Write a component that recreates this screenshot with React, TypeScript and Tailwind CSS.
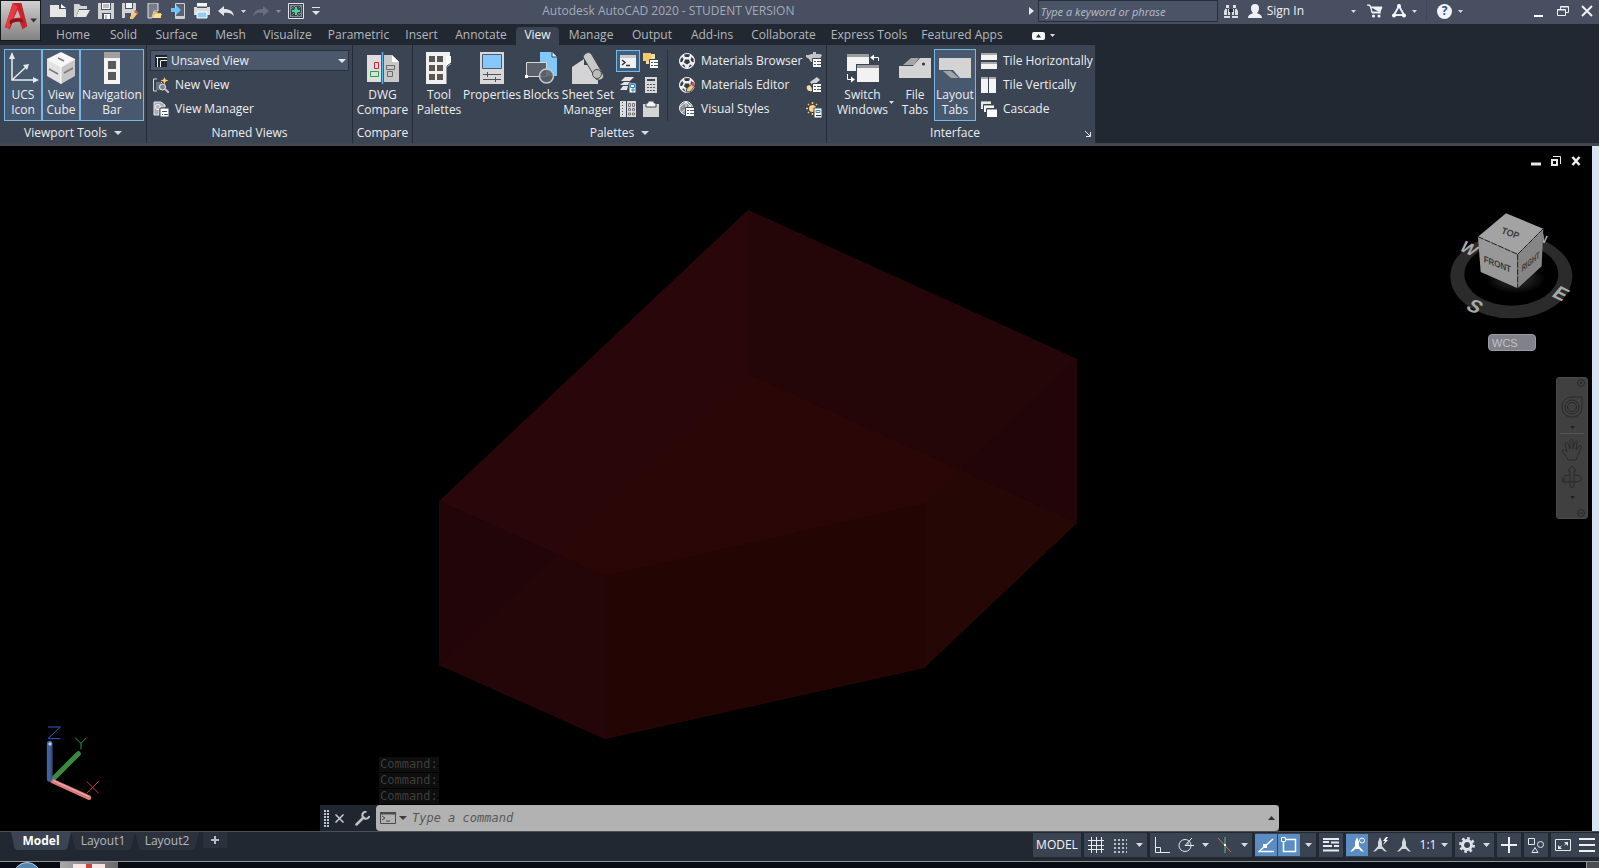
import type { ReactNode } from 'react'

type IconProps = { children: ReactNode; className?: string; box?: string }

function Icon({ children, className = 'w-4 h-4', box = '0 0 16 16' }: IconProps) {
  return (
    <svg className={`shrink-0 ${className}`} viewBox={box} fill="none" aria-hidden="true">
      {children}
    </svg>
  )
}

function Big({ children }: { children: ReactNode }) {
  return <Icon className="w-8 h-8" box="0 0 32 32">{children}</Icon>
}

function Caret({ className = 'w-[7px] h-1 text-[#d8dce2]' }: { className?: string }) {
  return (
    <svg className={`shrink-0 ${className}`} viewBox="0 0 8 4" preserveAspectRatio="none" aria-hidden="true">
      <path d="M0 0h8L4 4z" fill="currentColor" />
    </svg>
  )
}

const TABS = [
  { name: 'Home', width: 'w-[54px]' },
  { name: 'Solid', width: 'w-[47px]' },
  { name: 'Surface', width: 'w-[59px]' },
  { name: 'Mesh', width: 'w-[49px]' },
  { name: 'Visualize', width: 'w-[65px]' },
  { name: 'Parametric', width: 'w-[77px]' },
  { name: 'Insert', width: 'w-[49px]' },
  { name: 'Annotate', width: 'w-[70px]' },
  { name: 'View', width: 'w-[43px]' },
  { name: 'Manage', width: 'w-[64px]' },
  { name: 'Output', width: 'w-[58px]' },
  { name: 'Add-ins', width: 'w-[62px]' },
  { name: 'Collaborate', width: 'w-[81px]' },
  { name: 'Express Tools', width: 'w-[90px]' },
  { name: 'Featured Apps', width: 'w-[96px]' },
]

/* ---------- Title bar ---------- */

function QuickButton({ label, children }: { label: string; children: ReactNode }) {
  return (
    <button type="button" aria-label={label} className="flex h-[22px] w-6 items-center justify-center">
      <Icon>{children}</Icon>
    </button>
  )
}

function QuickAccess() {
  return (
    <div className="flex items-center pl-[46px]">
      <QuickButton label="New">
        <path d="M0 2h9v4h7v8H0z" fill="#e6e6e6" />
        <path d="M11 1l5 4h-5z" fill="#fff" />
      </QuickButton>
      <QuickButton label="Open">
        <path d="M0 1h5l2 2h6v3H5l-3 8H0z" fill="#d4d4d4" />
        <path d="M5 7h11l-4 7H2z" fill="#e8e8e8" />
      </QuickButton>
      <QuickButton label="Save">
        <path d="M0 0h16v16H0z" fill="#d2d2d2" />
        <path d="M3 0h10v7H3zM4 10h9v6H4z" fill="#4a5364" />
        <path d="M4 0h8v6H4zM6 11h6v5H6z" fill="#f5f5f5" />
        <path d="M5 2h6M5 4h6M8 12v4" stroke="#7b818c" />
      </QuickButton>
      <QuickButton label="Save As">
        <path d="M0 0h14v10l-5 5H0z" fill="#d2d2d2" />
        <path d="M3 0h8v6H3zM3 10h6v5H3z" fill="#4a5364" />
        <path d="M4 0h6v5H4z" fill="#f5f5f5" />
        <path d="M8 14l5-6 3 2-5 6-3 0z" fill="#f6c877" />
        <path d="M13 7l3 2-1 2-3-2z" fill="#e05a5a" />
      </QuickButton>
      <QuickButton label="Open from Web and Mobile">
        <path d="M2 0h10v8H8l-2 7H2z" fill="#777d88" stroke="#e0e0e0" />
        <path d="M6 15l2-6h3l1 1h3v5z" fill="#f4c35f" />
        <path d="M9 11h7l-2 4H7z" fill="#ffe0a0" />
      </QuickButton>
      <QuickButton label="Save to Web and Mobile">
        <path d="M5.500 .5h9v15h-9z" fill="#596271" stroke="#d0d0d0" />
        <path d="M6 13h8v2H6z" fill="#cfcfcf" />
        <path d="M1 5h5V2l5 5-5 5V9H1z" fill="#6cc3f5" />
      </QuickButton>
      <QuickButton label="Plot">
        <path d="M3 0h10v4H3z" fill="#f5f5f5" />
        <path d="M0 4h16v8H0z" fill="#dcdcdc" />
        <path d="M3 3.500h10v1.500H3z" fill="#4a5364" />
        <path d="M3 9h10v6H3z" fill="#8fcdf5" stroke="#fff" />
      </QuickButton>
      <QuickButton label="Undo">
        <path d="M0 8l6-5v3c6 0 9 2 10 7-3-3-5-3.500-10-3v3z" fill="#e2e4e8" />
      </QuickButton>
      <button type="button" aria-label="Undo list" className="flex w-[11px] justify-center"><Caret className="h-[3px] w-[5px] text-[#d8dce2]" /></button>
      <QuickButton label="Redo">
        <path d="M16 8l-6-5v3C4 6 1 8 0 13c3-3 5-3.500 10-3v3z" fill="#68707f" />
      </QuickButton>
      <button type="button" aria-label="Redo list" className="flex w-[11px] justify-center"><Caret className="h-[3px] w-[5px] text-[#8b92a0]" /></button>
      <QuickButton label="Isolate">
        <path d="M.5 .5h15v15H.5z" fill="#3a4450" stroke="#e0e4e8" />
        <path d="M2.500 2.500h11v11h-11z" stroke="#cfd4da" strokeDasharray="1 1" />
        <path d="M3 3l10 10M13 3L3 13M3 6l4-3M9 13l4-3" stroke="#a5adb8" strokeDasharray="1 1" />
        <path d="M8 4v8M4 8h8" stroke="#4fd394" strokeWidth="2" />
      </QuickButton>
      <button type="button" aria-label="Customize" className="flex h-[22px] w-4 flex-col items-center justify-center gap-[3px]">
        <span className="h-px w-2 bg-[#e0e3e8]" />
        <Caret className="h-1 w-2 text-[#e0e3e8]" />
      </button>
    </div>
  )
}

function TitleBar() {
  return (
    <header className="flex h-6 items-center bg-[#474f61] pb-[2px]">
      <QuickAccess />
      <h1 className="flex-1 text-center text-xs text-[#a5abb6]">Autodesk AutoCAD 2020 - STUDENT VERSION</h1>
      <div className="flex items-center pl-4">
        <Icon className="mr-1 h-2 w-[5px]" box="0 0 5 8"><path d="M0 0l5 4-5 4z" fill="#e6e9ee" /></Icon>
        <input
          type="text"
          aria-label="Search"
          placeholder="Type a keyword or phrase"
          className="h-[22px] w-[180px] border border-[#262d3a] bg-[#4b5467] px-[2px] text-[11px] italic text-white outline-none placeholder:text-[#b7bcc6]"
        />
        <button type="button" aria-label="Find" className="ml-[6px]">
          <Icon className="h-4 w-[14px]" box="0 0 14 16">
            <path d="M2 2h3v3l1 2v8H0V8l2-3zM9 2h3v3l2 3v7H8V7l1-2z" fill="#dadde2" />
            <path d="M5 6h4v3H5z" fill="#272c36" /><path d="M0 12.500h6M8 12.500h6M2 5.500h3M9 5.500h3M3.500 6v6M10.500 6v6" stroke="#4b505a" />
          </Icon>
        </button>
        <button type="button" className="ml-[9px] flex items-center gap-1 text-xs text-[#f0f1f3]">
          <Icon>
            <path d="M8 1c3 0 4 2 4 4 0 3-1 4-2 5 1 1 5 1 5 5H1c0-4 4-4 5-5-1-1-2-2-2-5 0-2 1-4 4-4z" fill="#edf0f4" />
          </Icon>
          Sign In
        </button>
        <button type="button" aria-label="Account menu" className="ml-[47px]"><Caret className="h-[3px] w-[5px] text-[#d8dce2]" /></button>
        <button type="button" aria-label="App store" className="ml-[11px]">
          <Icon>
            <path d="M0 2h3l2 8h9M4 4h11l-2 5H5z" fill="#eef1f5" stroke="#eef1f5" />
            <circle cx="6.500" cy="13" r="1.500" fill="#fff" /><circle cx="12" cy="13" r="1.500" fill="#fff" />
          </Icon>
        </button>
        <button type="button" aria-label="Connect" className="ml-2 flex items-center gap-[5px]">
          <Icon>
            <path d="M8 3L3 12h10z" stroke="#e6ebf3" strokeWidth="2" />
            <circle cx="8" cy="3" r="2" fill="#fff" /><circle cx="3" cy="12.500" r="2" fill="#fff" /><circle cx="13" cy="12.500" r="2" fill="#fff" />
          </Icon>
          <Caret className="h-[3px] w-[5px] text-[#d8dce2]" />
        </button>
        <span className="ml-[9px] h-5 w-px bg-[#3f4757]" />
        <button type="button" aria-label="Help" className="ml-[10px] flex items-center gap-[6px]">
          <span className="flex h-[15px] w-[15px] items-center justify-center rounded-full bg-[#f3f5f8] text-xs font-bold text-[#2c4b98]">?</span>
          <Caret className="h-[3px] w-[5px] text-[#d8dce2]" />
        </button>
        <div className="ml-[70px] mr-[6px] flex items-center gap-3">
          <button type="button" aria-label="Minimize">
            <Icon className="h-3 w-3" box="0 0 12 12"><path d="M1 11h9" stroke="#fff" strokeWidth="2" /></Icon>
          </button>
          <button type="button" aria-label="Restore">
            <Icon className="h-3 w-3" box="0 0 12 12">
              <path d="M3.500 4V1.500h8v6H9M.5 4.500h8v6h-8z" stroke="#eef0f3" /><path d="M.5 5h8M3.500 2h8" stroke="#eef0f3" />
            </Icon>
          </button>
          <button type="button" aria-label="Close">
            <Icon className="h-3 w-3" box="0 0 12 12"><path d="M1 1l10 10M11 1L1 11" stroke="#eef0f3" strokeWidth="2" /></Icon>
          </button>
        </div>
      </div>
    </header>
  )
}

function AppButton() {
  return (
    <button type="button" aria-label="Application menu" className="absolute left-0 top-0 z-10 h-[41px] w-[41px] border border-[#14181f] bg-linear-to-b from-[#d0d0d0] to-[#828282]">
      <svg viewBox="0 0 40 40" className="h-full w-full" aria-hidden="true">
        <path d="M12 2h9l6 24-5 3-3-8-7 1-3 7-5-2z" fill="#c8222c" />
        <path d="M17 9l3 8-7 1z" fill="#b9b9b9" />
        <path d="M12 2l5 4-5 13-4 9-4-1z" fill="#e23b42" />
        <path d="M9 20c5-3 9-3 13-1l1 3c-5-2-10-1-14 2z" fill="#8e121b" />
        <path d="M30 18h7l-3.500 4z" fill="#333" />
      </svg>
    </button>
  )
}

function RibbonTabs() {
  return (
    <nav className="flex h-[21px] items-end bg-[#222831] pl-[46px]">
      {TABS.map((tab) => (
        <button
          key={tab.name}
          type="button"
          className={`h-[18px] whitespace-nowrap pb-[2px] text-xs leading-4 ${tab.width} ${
            tab.name === 'View' ? 'rounded-t-sm bg-[#3b4452] text-[#f0f1f3]' : 'text-[#b4b8bf]'
          }`}
        >
          {tab.name}
        </button>
      ))}
      <button type="button" aria-label="Minimize ribbon" className="ml-[22px] flex h-[18px] items-center gap-[5px] pb-px">
        <Icon className="h-2 w-[13px]" box="0 0 13 8">
          <rect width="13" height="8" rx="2" fill="#f3f4f6" /><path d="M4 5.500L6.500 2 9 5.500z" fill="#222831" />
        </Icon>
        <Caret className="h-[3px] w-[5px] text-[#d8dce2]" />
      </button>
    </nav>
  )
}

/* ---------- Ribbon ---------- */

type PanelProps = { title: string; width: string; menu?: boolean; launcher?: boolean; children: ReactNode }

function Panel({ title, width, menu, launcher, children }: PanelProps) {
  return (
    <section className={`relative flex shrink-0 flex-col border-r border-[#252c38] bg-[#3b4452] pt-1 ${width}`}>
      <div className="flex h-[72px]">{children}</div>
      <h2 className={`flex h-[22px] items-center justify-center gap-[7px] pt-[2px] text-xs text-[#eceef1] ${launcher ? 'pr-3' : ''}`}>
        {title}
        {menu && <Caret className="h-1 w-2 text-[#d8dce2]" />}
      </h2>
      {launcher && (
        <button type="button" aria-label={`${title} settings`} className="absolute bottom-[6px] right-1">
          <Icon className="h-[6px] w-[6px]" box="0 0 6 6"><path d="M0 0l5 5M5.500 1v4.500H1" stroke="#e8eaee" /></Icon>
        </button>
      )}
    </section>
  )
}

type BigButtonProps = { lines: string[]; width: string; active?: boolean; children: ReactNode }

function BigButton({ lines, width, active, children }: BigButtonProps) {
  return (
    <button
      type="button"
      className={`flex h-[72px] shrink-0 flex-col items-center border pt-[2px] text-xs leading-[15px] text-[#eceef1] ${width} ${
        active ? 'border-[#76b8e8] bg-[#47586f]' : 'border-transparent'
      }`}
    >
      {children}
      <span className="mt-[3px] flex flex-col whitespace-nowrap">
        {lines.map((line) => <span key={line}>{line}</span>)}
      </span>
    </button>
  )
}

function RowButton({ label, children }: { label: string; children: ReactNode }) {
  return (
    <button type="button" className="flex h-6 items-center gap-[6px] whitespace-nowrap text-xs text-[#eceef1]">
      <Icon>{children}</Icon>
      {label}
    </button>
  )
}

function SmallButton({ label, active, children }: { label: string; active?: boolean; children: ReactNode }) {
  return (
    <button
      type="button"
      aria-label={label}
      className={`flex h-[22px] w-6 items-center justify-center border ${active ? 'border-[#76b8e8] bg-[#3d5f82]' : 'border-transparent'}`}
    >
      <Icon>{children}</Icon>
    </button>
  )
}

// list badge in the lower right corner of palette icons
function ListBadge({ tone = '#3b4452' }: { tone?: string }) {
  return (
    <>
      <path d="M6.500 6.500h9v9h-9z" fill="#fff" stroke={tone} />
      <path d="M8 9.500h2M11 9.500h4M8 12.500h2M11 12.500h4" stroke="#4a5260" />
    </>
  )
}

function Checkered() {
  return (
    <>
      <circle cx="8" cy="8" r="7.500" fill="#f0f0f0" stroke="#f5f5f5" />
      <path d="M5 1.500l3-.5 3 .5-1 2.500H6zM1.500 6l2-2 1 2.500L3 9 1.200 9zM14.500 6l-2-2-1 2.500L13 9h1.800zM6 6.500h4l1 3-3 2-3-2zM3 12l2-.5 1.500 3L5 14zM13 12l-2-.5-1.500 3 1.500-.5z" fill="#333b48" />
    </>
  )
}

function ViewportTools() {
  return (
    <Panel title="Viewport Tools" width="w-[147px]" menu>
      <div className="flex pl-1">
        <BigButton lines={['UCS', 'Icon']} width="w-[38px]" active>
          <Big>
            <path d="M5 4v24h24M5 28L19 15" stroke="#e8ebee" strokeWidth="1.500" />
            <path d="M5 0l3 7H2zM32 28l-6 3v-6zM22 12l-2 6-4-5z" fill="#e8ebee" />
          </Big>
        </BigButton>
        <BigButton lines={['View', 'Cube']} width="w-[38px]" active>
          <Big>
            <path d="M16 0l14 7-14 8L2 7z" fill="#f7f7f7" />
            <path d="M2 7l14 8v17L2 24z" fill="#e2e2e2" /><path d="M30 7l-14 8v17l14-8z" fill="#c6c6c6" />
            <path d="M13 6l6 3M4 17l9 5M19 21l9-5" stroke="#7a7a7a" strokeWidth="1.500" />
            <path d="M2 7l14 8 14-8M16 15v17" stroke="#fff" />
          </Big>
        </BigButton>
        <BigButton lines={['Navigation', 'Bar']} width="w-[64px]" active>
          <Big>
            <path d="M8 0h16v32H8z" fill="#f4f4f4" /><path d="M8 0h16v6H8z" fill="#a39f9f" />
            <path d="M12 9h8v8h-8zM12 20h8v8h-8z" fill="#5a5a5a" />
          </Big>
        </BigButton>
      </div>
    </Panel>
  )
}

function NamedViews() {
  return (
    <Panel title="Named Views" width="w-[206px]">
      <div className="flex flex-1 flex-col px-[3px]">
        <label className="relative mb-[2px] mt-px flex h-[21px] items-center border border-[#2a313e] bg-[#4b586c]">
          <span className="absolute left-1 flex h-3 w-3 items-center justify-center bg-[#1f242c]">
            <Icon className="h-3 w-3" box="0 0 12 12"><path d="M1 2.500h11M2.500 3v9M5.500 5.500H12M5.500 6v6" stroke="#f0f0e8" /></Icon>
          </span>
          <select aria-label="Named view" className="h-full w-full appearance-none pl-5 text-xs text-[#eceef1] outline-none">
            <option>Unsaved View</option>
          </select>
          <Caret className="pointer-events-none absolute right-[2px] h-1 w-2 text-[#e8eaee]" />
        </label>
        <div className="flex flex-col pl-[3px]">
          <RowButton label="New View">
            <path d="M4 2H.5v12H4M3 5.500h6" stroke="#d8dbe0" /><path d="M3 5h5v8H3z" fill="#6d7583" />
            <circle cx="9.500" cy="10" r="3" fill="#7b8491" stroke="#f0f0f0" /><path d="M12 12l4 4" stroke="#d0b4e0" strokeWidth="2" />
            <path d="M11.500 0l1 2.500 3 1-3 1-1 3-1-3-3-1 3-1z" fill="#ffcf70" />
          </RowButton>
          <RowButton label="View Manager">
            <path d="M1 1h7l4 3v2H6v8H1z" fill="#a9adb5" stroke="#e8e8e8" />
            <circle cx="5" cy="6" r="2.500" stroke="#f8f8f8" />
            <path d="M7 7h9v9H7z" fill="#fff" stroke="#3b4452" /><path d="M9 10.500h5M9 13.500h1M11 13.500h4" stroke="#4a5260" />
          </RowButton>
        </div>
      </div>
    </Panel>
  )
}

function Compare() {
  return (
    <Panel title="Compare" width="w-[60px]">
      <BigButton lines={['DWG', 'Compare']} width="w-[59px]">
        <Big>
          <path d="M0 3h14v27H0z" fill="#dedede" /><path d="M17 3h8l7 7v20H17z" fill="#c8c8c8" /><path d="M25 3l7 7h-7z" fill="#fff" />
          <path d="M15.500 0v32" stroke="#53b6f5" strokeWidth="1.500" />
          <path d="M7.500 10.500h4v6h-4z" stroke="#d3233a" /><path d="M3.500 19.500h8v5h-8z" stroke="#25a34a" />
          <path d="M19.500 13.500h8v4h-8zM20.500 19.500h5v5h-5z" stroke="#6b6b6b" />
        </Big>
      </BigButton>
    </Panel>
  )
}

function Palettes() {
  return (
    <Panel title="Palettes" width="w-[414px]" menu>
      <div className="flex pl-[3px]">
        <BigButton lines={['Tool', 'Palettes']} width="w-[46px]">
          <Big>
            <path d="M3 0h24v8l-3 8v16H3z" fill="#f0f0f0" /><path d="M23 4l5 0v8l-5 4z" fill="#fff" />
            <path d="M6 4h6v6H6zM14 4h6v6h-6zM6 13h6v6H6zM14 13h6v6h-6zM6 22h6v6H6zM14 22h6v6h-6z" fill="#5a5654" />
            <path d="M24 14v18M24 14l4-3" stroke="#3b4452" />
          </Big>
        </BigButton>
        <BigButton lines={['Properties']} width="w-[60px]">
          <Big>
            <path d="M4 0h24v32H4z" fill="#d8d8d8" /><path d="M6.500 2.500h19v14h-19z" fill="#86c8fa" stroke="#4b5b70" />
            <path d="M7 22.500h18M7 27.500h18M11.500 20v5M19.500 25v5" stroke="#4f5358" />
          </Big>
        </BigButton>
        <BigButton lines={['Blocks']} width="w-[38px]">
          <Big>
            <path d="M15 0h12l5 5v19H15z" fill="#83c8fb" /><path d="M27 0v5h5" fill="#d9effd" stroke="#3b4452" />
            <path d="M1.500 10.500h20v14h-20z" fill="#5a6069" stroke="#d6d8da" />
            <circle cx="21.500" cy="24" r="7" fill="#5a6069" fillOpacity=".85" stroke="#c5c8cb" strokeWidth="1.500" />
            <path d="M0 23h3v3H0z" fill="#fff" />
          </Big>
        </BigButton>
        <BigButton lines={['Sheet Set', 'Manager']} width="w-[56px]">
          <Big>
            <path d="M0 15l12-8v25H0zM12 13h14v19H12z" fill="#d4d4d4" />
            <path d="M11 5c2-5 7-6 9-2l11 19c2 4-2 8-7 5L11 5z" fill="#c8c8c8" stroke="#45494f" />
            <circle cx="25" cy="22" r="4.500" fill="#bcbcbc" stroke="#45494f" />
          </Big>
        </BigButton>
      </div>
      <div className="grid h-[72px] grid-cols-2 items-center">
        <SmallButton label="Command Line" active>
          <path d="M0 2h16v13H0z" fill="#f0f0f0" /><path d="M0 2h16v3H0z" fill="#c8c8c8" />
          <path d="M2 7l3 2.500L2 12M6 12.500h4" stroke="#333" strokeWidth="1.500" />
        </SmallButton>
        <SmallButton label="Markup Set Manager">
          <path d="M0 0h8v8H0z" fill="#f4c76b" /><path d="M8 1h4v5H8zM3 8h4v3H3z" fill="#f4dca8" /><ListBadge />
        </SmallButton>
        <SmallButton label="Layer Properties">
          <path d="M5 0h9l-4 4H1zM4 5h7l-3 3H0zM3 9h5l-1 4H0z" fill="#e4e4e4" />
          <path d="M9 6h7v10H9z" fill="#fff" stroke="#3b4452" /><path d="M10.500 7.500h4v3h-4z" stroke="#2986c9" /><path d="M11 13h4M13 11v4" stroke="#2986c9" />
        </SmallButton>
        <SmallButton label="Quick Calculator">
          <path d="M2 0h12v16H2z" fill="#d8d8d8" /><path d="M4 2h8v2H4z" fill="#3b4452" />
          <path d="M4 7h2v1H4zM7 7h2v1H7zM10 7h2v1h-2zM4 10h2v1H4zM7 10h2v1H7zM10 10h2v1h-2zM4 13h2v1H4zM7 13h2v1H7zM10 13h2v1h-2z" fill="#565b62" />
        </SmallButton>
        <SmallButton label="Sheet Palette">
          <path d="M0 0h6v16H0zM7 0h9v16H7z" fill="#dcdcdc" /><path d="M2.500 1v14" stroke="#555" strokeDasharray="1 2" />
          <path d="M8.500 2.500h2v3h-2zM12.500 2.500h2v3h-2zM8.500 7.500h2v2h-2zM12.500 7.500h2v2h-2zM8.500 12h2v2h-2zM12.500 12h2v2h-2z" stroke="#777" />
        </SmallButton>
        <SmallButton label="Clipboard">
          <path d="M0 3h16v13H0z" fill="#d4d4d4" /><path d="M5 0h6v2h2v4H3V2h2z" fill="#f5f5f5" stroke="#3b4452" />
        </SmallButton>
      </div>
      <span className="ml-[5px] h-[72px] w-px bg-[#2a313d]" />
      <div className="ml-[11px] flex w-[123px] flex-col">
        <RowButton label="Materials Browser"><Checkered /></RowButton>
        <RowButton label="Materials Editor">
          <Checkered />
          <path d="M7 15l1-4 6-5 2 3-5 6z" fill="#f6c877" stroke="#3b4452" /><path d="M12 7l2-2 2 2-2 3z" fill="#d94a58" />
        </RowButton>
        <RowButton label="Visual Styles">
          <circle cx="7" cy="7" r="6.500" fill="#8b9099" stroke="#f0f0f0" />
          <path d="M7 0v8L2 12M1 6l6-5 5 5M7 8l5-4" stroke="#eee" /><ListBadge />
        </RowButton>
      </div>
      <div className="flex flex-col justify-between">
        <SmallButton label="Render Presets">
          <path d="M0 3h3l2-1h9l2 1-2 4-3 3H5L3 7 0 5zM7 0h3v2H7z" fill="#bfc2c7" /><ListBadge />
        </SmallButton>
        <SmallButton label="Lights">
          <path d="M4 5l7-5 3 3-7 6z" fill="#cfd1d4" /><path d="M1 9c3-2 5 1 5 5-4 1-6-2-5-5z" fill="#f3dfa0" /><ListBadge />
        </SmallButton>
        <SmallButton label="Sun Properties">
          <circle cx="6.500" cy="6.500" r="3.500" fill="#ffd284" />
          <path d="M6.500 0v2M0 6.500h2M11 6.500h2M2 2l1 1M11 2l-1 1M2 11l1-1M6.500 11v2" stroke="#ffc875" strokeWidth="1.500" />
          <path d="M8 6h8v10H8z" fill="#fff" stroke="#3b4452" /><path d="M10 8.500h4v2h-4z" stroke="#2986c9" /><path d="M10 13.500h5" stroke="#333" />
        </SmallButton>
      </div>
    </Panel>
  )
}

function Interface() {
  return (
    <Panel title="Interface" width="w-[269px]" launcher>
      <div className="flex pl-[9px]">
        <BigButton lines={['Switch', 'Windows']} width="w-[53px]">
          <Big>
            <path d="M0 2h22v17H0z" fill="#f2f2f2" /><path d="M0 2h22v3H0z" fill="#9b9b9b" />
            <path d="M9 12h23v19H9z" fill="#3b4452" /><path d="M10 13h22v17H10z" fill="#f2f2f2" /><path d="M10 13h22v3H10z" fill="#9b9b9b" />
            <path d="M25 5.500h6.500V9M.5 22v5.500H7" stroke="#fff" /><path d="M23 5.500l4-3v6zM8 27.500l-4-3v6z" fill="#fff" />
          </Big>
        </BigButton>
        <button type="button" aria-label="Window list" className="mt-[52px] flex w-[7px] self-start"><Caret className="h-[3px] w-[5px] text-[#d8dce2]" /></button>
        <BigButton lines={['File', 'Tabs']} width="w-[38px]">
          <Big>
            <path d="M4 13l8-7h8l-5 7z" fill="#a5a5a5" /><path d="M0 14h14l7-8h11v20H0z" fill="#d4d4d4" />
            <circle cx="24.500" cy="12" r="1.500" fill="#333" />
          </Big>
        </BigButton>
        <BigButton lines={['Layout', 'Tabs']} width="w-[42px]" active>
          <Big>
            <path d="M4 19h8l8 7h-8z" fill="#a5a5a5" /><path d="M0 6h32v20H21l-7-8H0z" fill="#d4d4d4" />
          </Big>
        </BigButton>
      </div>
      <div className="flex flex-col pl-[5px]">
        <RowButton label="Tile Horizontally">
          <path d="M0 0h16v7H0zM0 9h16v7H0z" fill="#f4f4f4" /><path d="M0 0h16v2H0zM0 9h16v2H0z" fill="#a8a8a8" />
        </RowButton>
        <RowButton label="Tile Vertically">
          <path d="M0 0h7v16H0zM8 0h7v16H8z" fill="#f4f4f4" /><path d="M0 0h7v2H0zM8 0h7v2H8z" fill="#a8a8a8" />
        </RowButton>
        <RowButton label="Cascade">
          <path d="M0 0h10v8H0z" fill="#e8e8e8" /><path d="M2.500 3.500h11v8h-11z" fill="#f4f4f4" stroke="#3b4452" />
          <path d="M5.500 7.500h11v9h-11z" fill="#fff" stroke="#3b4452" /><path d="M0 .5h10M3 4.500h10M6 8.500h10" stroke="#a8a8a8" />
        </RowButton>
      </div>
    </Panel>
  )
}

/* ---------- Drawing area ---------- */

function Solid() {
  return (
    <svg className="absolute inset-0 h-full w-full" viewBox="0 146 1592 685" role="img" aria-label="Extruded solid">
      <path d="M748 210L1077 359V523L924 668 605 739 439 665V501z" fill="#28060a" />
      <path d="M748 210L1077 359V523L748 374z" fill="#240508" />
      <path d="M1077 359V523L960 470z" fill="#210508" />
      <path d="M748 374L960 470 926 503 605 576 557 554z" fill="#2a0607" />
      <path d="M960 470L1077 523 924 668 926 503z" fill="#250705" />
      <path d="M439 501L605 576V739L439 665z" fill="#240508" />
      <path d="M439 501L557 554 439 665z" fill="#210508" />
      <path d="M605 576L926 503 924 668 605 739z" fill="#230604" />
    </svg>
  )
}

function ViewCube() {
  return (
    <div className="absolute right-[15px] top-[61px] flex flex-col items-center">
      <svg className="h-[120px] w-[130px]" viewBox="140 200 390 360" fontFamily="Liberation Sans" fontWeight="700" aria-hidden="true">
        <defs>
          <radialGradient id="glow">
            <stop offset=".5" stopColor="#1c1c1c" /><stop offset="1" stopColor="#000" />
          </radialGradient>
        </defs>
        <ellipse cx="333" cy="408" rx="183" ry="126" fill="#2b2b2b" />
        <ellipse cx="333" cy="402" rx="141" ry="94" fill="#000" />
        <ellipse cx="345" cy="415" rx="90" ry="45" fill="url(#glow)" />
        <g fill="#a9a9a9" fontSize="58">
          <text transform="translate(174 328) rotate(26) skewX(-14)" fontSize="50">W</text>
          <text transform="translate(412 300) rotate(24)" fontSize="34">N</text>
          <text transform="translate(193 505) rotate(26) skewX(-14)">S</text>
          <text transform="translate(451 467) rotate(26) skewX(-14)">E</text>
        </g>
        <path d="M317 219L429 265 352 342 233 289z" fill="#a3a3a3" />
        <path d="M233 289L352 342V444L241 395z" fill="#989898" />
        <path d="M429 265L352 342V444L424 378z" fill="#858585" />
        <path d="M233 289L352 342 429 265M352 342V444" fill="none" stroke="#222" strokeWidth="3" strokeDasharray="18 4" />
        <g fill="#3a3a3a" fontSize="28">
          <text transform="matrix(.9 .3 -.35 .95 301 279)">TOP</text>
          <text transform="matrix(.85 .33 0 1 250 365)">FRONT</text>
          <text transform="matrix(.62 -.5 0 1 364 395)">RIGHT</text>
        </g>
      </svg>
      <button type="button" className="mt-[7px] h-[17px] w-12 rounded-sm border border-[#9a9aa4] bg-[#81818b] pl-[3px] text-left font-['Liberation_Sans'] text-[11px] leading-[14px] text-[#c0c0c8]">
        WCS
      </button>
    </div>
  )
}

function NavigationBar() {
  return (
    <div className="absolute right-1 top-[231px] flex h-[142px] w-8 flex-col items-center rounded-[3px] border border-[#4a4a4a] bg-[#404040] text-[#2a2a2a]">
      <button type="button" aria-label="Close bar" className="self-end pr-[2px] pt-[1px]">
        <Icon className="h-2 w-2" box="0 0 8 8"><circle cx="4" cy="4" r="3.500" stroke="currentColor" /><path d="M2.500 2.500l3 3M5.500 2.500l-3 3" stroke="currentColor" /></Icon>
      </button>
      <button type="button" aria-label="Steering wheel" className="mt-[9px]">
        <Icon className="h-[22px] w-[22px]" box="0 0 22 22">
          <path d="M21 1h-9C5 1 1 5 1 11s4 10 10 10 10-4 10-10z" stroke="currentColor" /><circle cx="11" cy="11" r="7" stroke="currentColor" />
          <circle cx="11" cy="11" r="4.500" stroke="currentColor" />
        </Icon>
      </button>
      <Caret className="mt-[8px] h-[3px] w-[5px] text-[#222]" />
      <span className="mt-1 h-px w-6 bg-[#555]" />
      <button type="button" aria-label="Pan" className="mt-1">
        <Icon className="h-6 w-[22px]" box="0 0 22 24">
          <path d="M7 22c-1-4-4-6-6-9 1-2 3-1 5 1L4 6c0-2 2-2 3 0l2 5V3c0-2 3-2 3 0v8l2-7c1-2 3-1 2 1l-1 7 3-4c2-1 3 0 2 2-2 4-3 8-5 12z" stroke="currentColor" />
        </Icon>
      </button>
      <button type="button" aria-label="Orbit" className="mt-1">
        <Icon className="h-[22px] w-[22px]" box="0 0 22 22">
          <path d="M11 0l4 5h-2v16H9V5H7zM8 9c-9 1-9 6 0 7M14 9c9 1 9 6 0 7l-7 0M5 18l-4-3 4-3" stroke="currentColor" />
        </Icon>
      </button>
      <Caret className="mt-[8px] h-[3px] w-[5px] text-[#222]" />
      <button type="button" aria-label="Bar options" className="mt-auto self-end pb-[1px] pr-[2px]">
        <Icon className="h-2 w-2" box="0 0 8 8"><circle cx="4" cy="4" r="3.500" stroke="currentColor" /><path d="M2 4h4" stroke="currentColor" /></Icon>
      </button>
    </div>
  )
}

function UcsAxes() {
  return (
    <svg className="absolute bottom-[29px] left-[43px] h-20 w-[60px]" viewBox="130 65 180 240" fill="none" aria-hidden="true">
      <path d="M164 232L236 160" stroke="#3a8a3c" strokeWidth="15" strokeLinecap="round" />
      <path d="M158 242L268 292" stroke="#d97c7c" strokeWidth="14" strokeLinecap="round" />
      <path d="M162 241L268 289" stroke="#f2b3b3" strokeWidth="3" />
      <path d="M150 130V236" stroke="#42609a" strokeWidth="17" strokeLinecap="round" />
      <path d="M155 135V236" stroke="#35507e" strokeWidth="4" />
      <circle cx="151" cy="131" r="5" fill="#b8ccee" />
      <path d="M145 80h37l-37 35h37" stroke="#2a62c8" strokeWidth="3" />
      <path d="M226 112l18 17 17-17M244 129v18" stroke="#2f9a35" strokeWidth="3" />
      <path d="M261 243l36 36M297 243l-36 36" stroke="#c33" strokeWidth="3" />
    </svg>
  )
}

function CommandLine() {
  return (
    <div className="absolute bottom-0 left-80 right-[313px] font-['DejaVu_Sans_Mono'] text-xs">
      <div className="mb-px ml-[59px] flex flex-col items-start gap-px text-[#3d3d3d]">
        {[0, 1, 2].map((line) => (
          <span key={line} className="h-[15px] bg-[#0e0e0e] px-[1px] leading-[15px]">Command:</span>
        ))}
      </div>
      <div className="flex h-[26px] bg-[#20262f]">
        <div className="flex w-14 items-center gap-[6px] pl-1">
          <Icon className="h-[17px] w-[5px]" box="0 0 5 17">
            <path d="M1 0v17M4 0v17" stroke="#c4c8ce" strokeWidth="2" strokeDasharray="2 1" />
          </Icon>
          <button type="button" aria-label="Close command line">
            <Icon className="h-[9px] w-[9px]" box="0 0 9 9"><path d="M.5 .5l8 8M8.500 .5l-8 8" stroke="#c9ccd1" strokeWidth="1.500" /></Icon>
          </button>
          <button type="button" aria-label="Customize" className="ml-[5px]">
            <Icon className="h-[15px] w-[15px]" box="0 0 15 15">
              <path d="M1.500 13.500l7-7" stroke="#c0c0c0" strokeWidth="2.500" strokeLinecap="round" />
              <path d="M11.500 .8a3.500 3.500 0 1 0 2.800 4.200" stroke="#c0c0c0" strokeWidth="2.200" />
            </Icon>
          </button>
        </div>
        <div className="flex flex-1 items-center rounded-sm bg-[#b2b2b2] px-1">
          <button type="button" aria-label="Recent commands" className="flex items-center gap-[3px]">
            <Icon className="h-3 w-4" box="0 0 16 12">
              <path d="M.5 .5h15v11H.5z" stroke="#4b4b4b" /><path d="M0 0h16v2.500H0z" fill="#4b4b4b" /><path d="M2 4l3 2-3 2M6 9h4" stroke="#4b4b4b" />
            </Icon>
            <Caret className="h-1 w-2 text-[#3e3e3e]" />
          </button>
          <input type="text" aria-label="Command" placeholder="Type a command" className="ml-[5px] min-w-0 flex-1 italic text-[#222] outline-none placeholder:text-[#585858]" />
          <Icon className="h-1 w-[7px]" box="0 0 7 4"><path d="M0 4h7L3.500 0z" fill="#333" /></Icon>
        </div>
      </div>
    </div>
  )
}

function Viewport() {
  return (
    <main className="flex min-h-0 flex-1 bg-[#d6e4f2]">
      <div className="relative mr-[7px] flex-1 overflow-hidden bg-black">
        <Solid />
        <div className="absolute right-[11px] top-[10px] flex gap-[10px]">
          <button type="button" aria-label="Minimize drawing">
            <Icon className="h-[10px] w-[10px]" box="0 0 10 10"><path d="M0 8h10" stroke="#e8e8e8" strokeWidth="3" /></Icon>
          </button>
          <button type="button" aria-label="Restore drawing">
            <Icon className="h-[10px] w-[10px]" box="0 0 10 10"><path d="M1 4h5v5H1z" stroke="#e8e8e8" strokeWidth="2" /><path d="M2 .5h7.500V8" stroke="#e8e8e8" /></Icon>
          </button>
          <button type="button" aria-label="Close drawing">
            <Icon className="h-[10px] w-[10px]" box="0 0 10 10"><path d="M1.500 1l7 8M8.500 1l-7 8" stroke="#eee" strokeWidth="2.500" /></Icon>
          </button>
        </div>
        <ViewCube />
        <NavigationBar />
        <UcsAxes />
        <CommandLine />
      </div>
    </main>
  )
}

/* ---------- Status bar ---------- */

function LayoutTab({ label, active }: { label: string; active?: boolean }) {
  return (
    <button
      type="button"
      className={`h-[18px] pb-px text-xs leading-4 [clip-path:polygon(0_0,100%_0,94%_90%,90%_100%,10%_100%,6%_90%)] ${
        active ? 'w-[60px] bg-[#3b4452] font-bold text-white' : 'w-16 bg-[#2b323e] text-[#b4b8bf]'
      }`}
    >
      {label}
    </button>
  )
}

function Group({ children }: { children: ReactNode }) {
  return <div className="flex h-6 items-center bg-[#3a4352]">{children}</div>
}

type ToolProps = { label: string; on?: boolean; children: ReactNode }

function Tool({ label, on, children }: ToolProps) {
  return (
    <button type="button" aria-label={label} className={`flex h-[22px] items-center justify-center ${on ? 'w-[22px] bg-[#5b8cc4]' : 'w-6'}`}>
      <Icon>{children}</Icon>
    </button>
  )
}

function ToolMenu({ label }: { label: string }) {
  return (
    <button type="button" aria-label={label} className="flex h-[22px] w-[15px] items-center justify-center">
      <Caret />
    </button>
  )
}

const FIGURE = 'M8 0l2 5v4l5 6-3-1-2-2-2 0-2 0-2 2-3 1 5-6V5z'

function StatusBar() {
  return (
    <footer className="flex h-[30px] shrink-0 justify-between border-t border-[#4b5058] bg-[#222831]">
      <div className="flex pl-[11px]">
        <LayoutTab label="Model" active />
        <LayoutTab label="Layout1" />
        <LayoutTab label="Layout2" />
        <button type="button" aria-label="New layout" className="ml-1 flex h-4 w-6 items-center justify-center bg-[#2b323e]">
          <Icon className="h-2 w-2" box="0 0 8 8"><path d="M4 0v8M0 4h8" stroke="#b9bdc4" strokeWidth="2" /></Icon>
        </button>
      </div>
      <div className="flex gap-[3px] pt-px">
        <Group><button type="button" className="h-6 w-12 text-xs text-[#f3f4f6]">MODEL</button></Group>
        <Group>
          <Tool label="Grid"><path d="M3.500 0v16M8.500 0v16M13.500 0v16M0 3.500h16M0 8.500h16M0 12.500h16" stroke="#e6e9ee" /></Tool>
          <Tool label="Snap">
            <path d="M2 3h13M2 7h13M2 11h13M2 15h13" stroke="#e6e9ee" strokeWidth="1.500" strokeDasharray="2 2" />
          </Tool>
          <ToolMenu label="Snap menu" />
        </Group>
        <Group>
          <Tool label="Ortho"><path d="M1.500 0v15.500H16M1.500 10.500h5v5" stroke="#e6e9ee" /></Tool>
          <Tool label="Polar">
            <circle cx="7" cy="8.500" r="6" stroke="#e6e9ee" /><path d="M7 8.500h9M7 8.500L14 1M10 5.500v3" stroke="#e6e9ee" />
          </Tool>
          <ToolMenu label="Polar menu" />
          <Tool label="Isodraft">
            <path d="M1 1l13 14" stroke="#d96a6a" /><path d="M8 0v16" stroke="#58c27a" /><path d="M7 7h2v2H7z" fill="#fff" />
          </Tool>
          <ToolMenu label="Isodraft menu" />
        </Group>
        <div className="flex h-6 items-center gap-px bg-[#3a4352]">
          <Tool label="Object snap tracking" on><path d="M16 14.500H1L15 2" stroke="#fff" strokeWidth="1.500" /><path d="M5 7h4v4H5z" fill="#fff" /></Tool>
          <Tool label="Object snap" on><path d="M3 2.500h11.500v12H2.500V4" stroke="#fff" strokeWidth="1.500" /><path d="M.5 .5h4v4h-4z" fill="#5b8cc4" stroke="#fff" /></Tool>
          <ToolMenu label="Object snap menu" />
        </div>
        <Group>
          <Tool label="Lineweight"><path d="M0 2h16M0 5h6M8 5.500h8M0 9h9M11 9h5M0 13.500h16" stroke="#e6e9ee" strokeWidth="2" /></Tool>
        </Group>
        <Group>
          <Tool label="Annotation visibility" on><path d={FIGURE} fill="#fff" /><circle cx="13" cy="3.500" r="2.500" stroke="#fff" /></Tool>
          <Tool label="Auto scale"><path d={FIGURE} fill="#d5d8dd" /><path d="M14 0l-3 4h2l-2 4 5-5h-2l2-3z" fill="#fff" /></Tool>
          <Tool label="Annotation scale"><path d={FIGURE} fill="#d5d8dd" /></Tool>
          <button type="button" className="flex h-6 w-9 items-center justify-center gap-[5px] text-xs text-[#f3f4f6]">1:1 <Caret /></button>
        </Group>
        <Group>
          <Tool label="Workspace">
            <circle cx="8" cy="8" r="4.500" stroke="#dfe2e6" strokeWidth="3" />
            <circle cx="8" cy="8" r="6.700" stroke="#dfe2e6" strokeWidth="2.600" strokeDasharray="2.630 2.630" />
          </Tool>
          <ToolMenu label="Workspace menu" />
        </Group>
        <Group><Tool label="Annotation monitor"><path d="M8 0v16M0 8h16" stroke="#eef0f3" strokeWidth="2" /></Tool></Group>
        <Group>
          <Tool label="Isolate objects"><path d="M.5 1.500h6v6h-6zM7 15.500l-3 0 3-5 3 5z" stroke="#e6e9ee" /><circle cx="12.500" cy="7.500" r="3" stroke="#e6e9ee" /></Tool>
        </Group>
        <Group>
          <Tool label="Clean screen">
            <path d="M.5 2.500h15v11H.5z" stroke="#e6e9ee" /><path d="M9 5h4v4zM3 8v4h4z" fill="#e6e9ee" /><path d="M12 6l-2.500 2M4 11l2.500-2" stroke="#e6e9ee" />
          </Tool>
          <Tool label="Customization"><path d="M0 2h16M0 8h16M0 14h16" stroke="#eef0f3" strokeWidth="2" /></Tool>
        </Group>
      </div>
    </footer>
  )
}

function Taskbar() {
  return (
    <div className="flex h-[7px] shrink-0 overflow-hidden border-t border-[#8f9499] bg-[#080b12]">
      <button type="button" aria-label="Start" className="ml-[13px] h-7 w-7 rounded-full border border-[#b9d2e6] bg-[#5585ad]" />
      <button type="button" aria-label="AutoCAD" className="ml-[19px] flex h-7 w-[58px] justify-center bg-linear-to-r from-[#a8a8a8] to-[#6a6a6a] pt-[2px]">
        <span className="flex h-6 w-8 justify-center bg-[#f7e6e4]"><span className="h-2 w-[6px] bg-[#c8463f]" /></span>
      </button>
      <span className="ml-auto h-full w-[13px] border-l border-[#999] bg-[#4a4d52]" />
    </div>
  )
}

export default function App() {
  return (
    <div className="relative flex h-screen flex-col overflow-hidden bg-[#222831] font-['Open_Sans',sans-serif]">
      <AppButton />
      <TitleBar />
      <RibbonTabs />
      <div className="flex h-[101px] shrink-0 border-b-3 border-[#40474f] bg-[#222831]">
        <ViewportTools />
        <NamedViews />
        <Compare />
        <Palettes />
        <Interface />
      </div>
      <Viewport />
      <StatusBar />
      <Taskbar />
    </div>
  )
}
